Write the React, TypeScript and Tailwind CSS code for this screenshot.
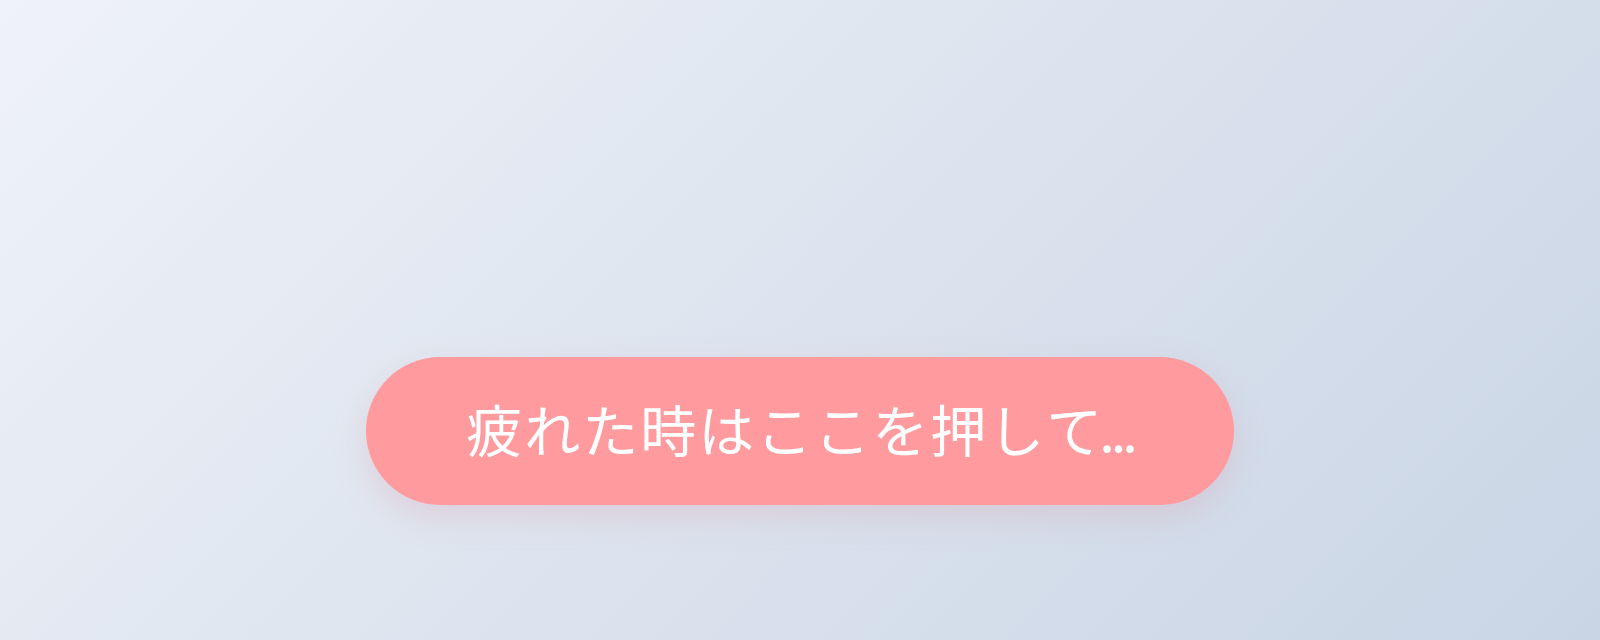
export default function App() {
  return (
    <div
      className="w-full h-[640px] overflow-hidden bg-[linear-gradient(135deg,#eff2f8_0%,#c9d5e5_100%)] flex flex-col items-center pt-[357px]"
      style={{ fontFamily: '"Noto Sans CJK JP", "Noto Sans", sans-serif' }}
    >
      <button className="h-[148px] w-[868px] rounded-full bg-[#ff9a9e] text-white text-[56px] font-normal flex items-center justify-center shadow-[0_12px_32px_rgba(220,150,165,0.28)]">
        <span className="pb-[6px] tracking-[2px] whitespace-nowrap">
          疲れた時はここを押し<span className="tracking-[-3px]">て</span><span className="tracking-[-4px]">...</span>
        </span>
      </button>
    </div>
  );
}
